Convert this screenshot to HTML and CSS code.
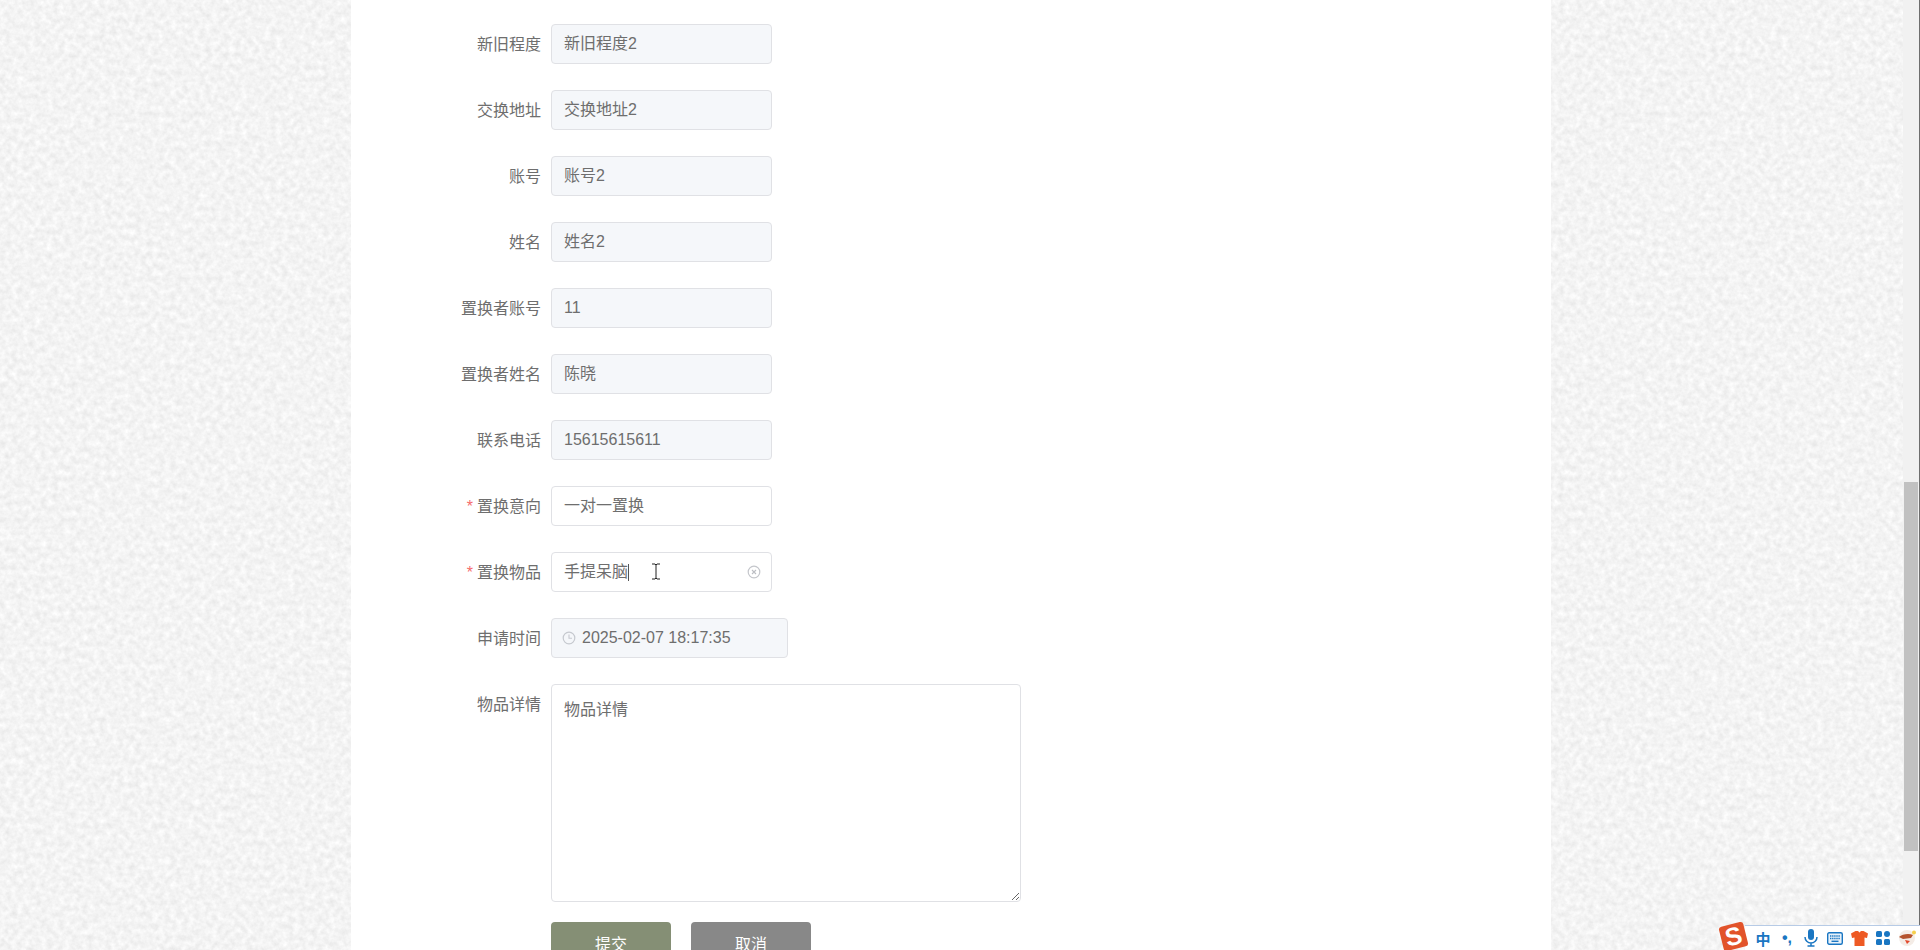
FILE: index.html
```html
<!DOCTYPE html>
<html lang="zh-CN">
<head>
  <meta charset="UTF-8">
  <title>置换申请</title>
  <link rel="stylesheet" href="styles.css">
</head>
<body>
  <!-- paper texture behind the page -->
  <svg class="paper" aria-hidden="true">
    <filter id="paper-noise" color-interpolation-filters="sRGB" x="0" y="0" width="100%" height="100%">
      <feTurbulence type="fractalNoise" baseFrequency="0.17" numOctaves="3" seed="7"/>
      <feColorMatrix type="matrix" values="0.12 0 0 0 0.895  0.12 0 0 0 0.895  0.12 0 0 0 0.895  0 0 0 0 1"/>
    </filter>
    <rect width="100%" height="100%" filter="url(#paper-noise)"/>
  </svg>

  <main class="page">
    <form class="panel">
      <div class="row">
        <label class="label">新旧程度</label>
        <div class="input disabled">新旧程度2</div>
      </div>
      <div class="row">
        <label class="label">交换地址</label>
        <div class="input disabled">交换地址2</div>
      </div>
      <div class="row">
        <label class="label">账号</label>
        <div class="input disabled">账号2</div>
      </div>
      <div class="row">
        <label class="label">姓名</label>
        <div class="input disabled">姓名2</div>
      </div>
      <div class="row">
        <label class="label">置换者账号</label>
        <div class="input disabled">11</div>
      </div>
      <div class="row">
        <label class="label">置换者姓名</label>
        <div class="input disabled">陈晓</div>
      </div>
      <div class="row">
        <label class="label">联系电话</label>
        <div class="input disabled">15615615611</div>
      </div>
      <div class="row">
        <label class="label required">置换意向</label>
        <div class="input">一对一置换</div>
      </div>
      <div class="row">
        <label class="label required">置换物品</label>
        <div class="input focused">
          <span>手提呆脑</span><span class="caret"></span>
          <svg class="clear" width="14" height="14" viewBox="0 0 14 14" aria-hidden="true">
            <circle cx="7" cy="7" r="5.8" fill="none" stroke="#c4c6cb" stroke-width="1.2"/>
            <path d="M5 5l4 4M9 5l-4 4" stroke="#bcbec3" stroke-width="1.1"/>
          </svg>
          <svg class="ibeam" width="10" height="17" viewBox="0 0 10 17" aria-hidden="true">
            <path d="M1 1h3l1 1 1-1h3M5 2v13M1 16h3l1-1 1 1h3" fill="none" stroke="#222" stroke-width="1"/>
          </svg>
        </div>
      </div>
      <div class="row">
        <label class="label">申请时间</label>
        <div class="input disabled date">
          <svg class="clock" width="14" height="14" viewBox="0 0 14 14" aria-hidden="true">
            <circle cx="7" cy="7" r="5.8" fill="none" stroke="#c6c9cf" stroke-width="1.2"/>
            <path d="M7 3.6V7.3h3" fill="none" stroke="#c6c9cf" stroke-width="1.1"/>
          </svg>
          <span>2025-02-07 18:17:35</span>
        </div>
      </div>
      <div class="row detail">
        <label class="label">物品详情</label>
        <textarea class="textarea" readonly>物品详情</textarea>
      </div>
      <div class="actions">
        <button type="button" class="btn submit">提交</button>
        <button type="button" class="btn cancel">取消</button>
      </div>
    </form>
  </main>

  <div class="scrollbar"><div class="thumb"></div></div>

  <!-- input method toolbar, floats over the page -->
  <div class="ime">
    <div class="ime-logo"><span>S</span></div>
    <div class="ime-bar">
      <span class="ime-zh">中</span>
      <span class="ime-punct">•,</span>
      <svg width="14" height="18" viewBox="0 0 14 18" aria-hidden="true">
        <rect x="4" y="0" width="6" height="11" rx="3" fill="#1a76c2"/>
        <path d="M1 8a6 6 0 0 0 12 0M7 14v2.5M3.5 17h7" fill="none" stroke="#1a76c2" stroke-width="1.5"/>
      </svg>
      <svg width="16" height="13" viewBox="0 0 16 13" aria-hidden="true">
        <rect x="0.7" y="0.7" width="14.6" height="11.6" rx="1.5" fill="#e8f2fa" stroke="#1a76c2" stroke-width="1.4"/>
        <path d="M3 4h10M3 6.5h10" stroke="#1a76c2" stroke-width="1.4" stroke-dasharray="1.4 .7"/>
        <path d="M4.5 9.3h7" stroke="#1a76c2" stroke-width="1.4"/>
      </svg>
      <svg width="17" height="15" viewBox="0 0 17 15" aria-hidden="true">
        <path d="M4.500 0h2.500l1.500 1.500L10 0h2.500L17 2.500 16 7l-2.500-.5V15h-10V6.500L1 7 0 2.500z" fill="#ee5a24"/>
      </svg>
      <svg width="14" height="14" viewBox="0 0 14 14" aria-hidden="true">
        <rect width="6" height="6" rx="1.500" fill="#1a76c2"/>
        <rect x="8" width="6" height="6" rx="3" fill="#1a76c2"/>
        <rect y="8" width="6" height="6" rx="1.500" fill="#1a76c2"/>
        <rect x="8" y="8" width="6" height="6" rx="1.500" fill="#1a76c2"/>
      </svg>
      <svg width="17" height="16" viewBox="0 0 17 16" aria-hidden="true">
        <circle cx="8" cy="8" r="8" fill="#f4ece6"/>
        <path d="M0 7c3-3 10-4 14-2l-2 3-8 1z" fill="#b5522c"/>
        <path d="M6 10l5 1-3 3z" fill="#e2492c"/>
        <circle cx="15" cy="2.500" r="2" fill="#f6cf4a"/>
      </svg>
    </div>
  </div>
</body>
</html>
```

FILE: styles.css
```css
html, body {
  margin: 0;
  height: 100%;
  overflow: hidden;
}
body {
  position: relative;
  display: flex;
  font-family: "Liberation Sans", "Noto Sans CJK SC", sans-serif;
  font-size: 16px;
  color: #6e6e6e;
}
.paper {
  position: absolute;
  top: 0;
  left: 0;
  width: 100%;
  height: 100%;
}

.page {
  position: relative;
  flex: 1;
  display: flex;
  justify-content: center;
  min-width: 0;
  padding-right: 1px;
}
.panel {
  width: 1200px;
  height: 100%;
  padding-top: 24px;
  box-sizing: border-box;
  background-color: #fff;
}

.row {
  display: flex;
  margin-bottom: 26px;
}
.label {
  width: 190px;
  height: 40px;
  margin-right: 10px;
  padding-top: 1px;
  box-sizing: border-box;
  line-height: 40px;
  text-align: right;
}
.required::before {
  content: "*";
  margin-right: 4px;
  color: #f56c6c;
}
.input {
  position: relative;
  display: flex;
  align-items: center;
  width: 221px;
  height: 40px;
  padding: 0 12px;
  box-sizing: border-box;
  border: 1px solid #e0e1e5;
  border-radius: 4px;
  background-color: #fff;
  line-height: 20px;
}
.disabled {
  background-color: #f5f7fa;
}
.date {
  width: 237px;
  padding-left: 10px;
}
.clock {
  margin-right: 6px;
}
.caret {
  width: 1px;
  height: 17px;
  background-color: #555;
}
.clear {
  margin-left: auto;
  margin-right: -2px;
}
.ibeam {
  position: absolute;
  top: 10px;
  left: 99px;
}
.detail {
  margin-bottom: 20px;
}
.textarea {
  display: block;
  width: 470px;
  height: 218px;
  padding: 12px 12px;
  box-sizing: border-box;
  border: 1px solid #e0e1e5;
  border-radius: 4px;
  font: inherit;
  line-height: 26px;
  color: inherit;
  outline: none;
  resize: both;
}

.actions {
  display: flex;
  gap: 20px;
  padding-left: 200px;
}
.btn {
  width: 120px;
  height: 42px;
  padding: 0;
  border: 0;
  border-radius: 4px;
  font: inherit;
  color: #fff;
}
.submit {
  background-color: #858f75;
}
.cancel {
  background-color: #888;
}

.scrollbar {
  position: relative;
  width: 17px;
  padding-top: 482px;
  padding-left: 1px;
  box-sizing: border-box;
  border-right: 1px solid #6e6e6e;
  background-color: #f1f1f1;
}
.thumb {
  width: 14px;
  height: 369px;
  background-color: #c1c1c1;
}

.ime {
  position: absolute;
  right: 0;
  bottom: 0;
  display: flex;
  align-items: flex-end;
}
.ime-logo {
  position: relative;
  z-index: 1;
  display: flex;
  align-items: center;
  justify-content: center;
  width: 25px;
  height: 25px;
  margin-right: -1px;
  margin-bottom: 1px;
  border-radius: 3px;
  background-color: #e2532a;
  transform: rotate(-14deg);
  font-weight: bold;
  font-size: 25px;
  color: #fff;
}
.ime-bar {
  display: grid;
  grid-template-columns: repeat(7, 24px);
  align-items: center;
  justify-items: center;
  width: 175px;
  height: 25px;
  box-sizing: border-box;
  border-top: 1px solid #b7cbe6;
  background-color: #fff;
  padding-left: 6px;
}
.ime-zh {
  font-size: 15px;
  font-weight: bold;
  color: #1a76c2;
}
.ime-punct {
  font-weight: bold;
  color: #1a76c2;
}
```
